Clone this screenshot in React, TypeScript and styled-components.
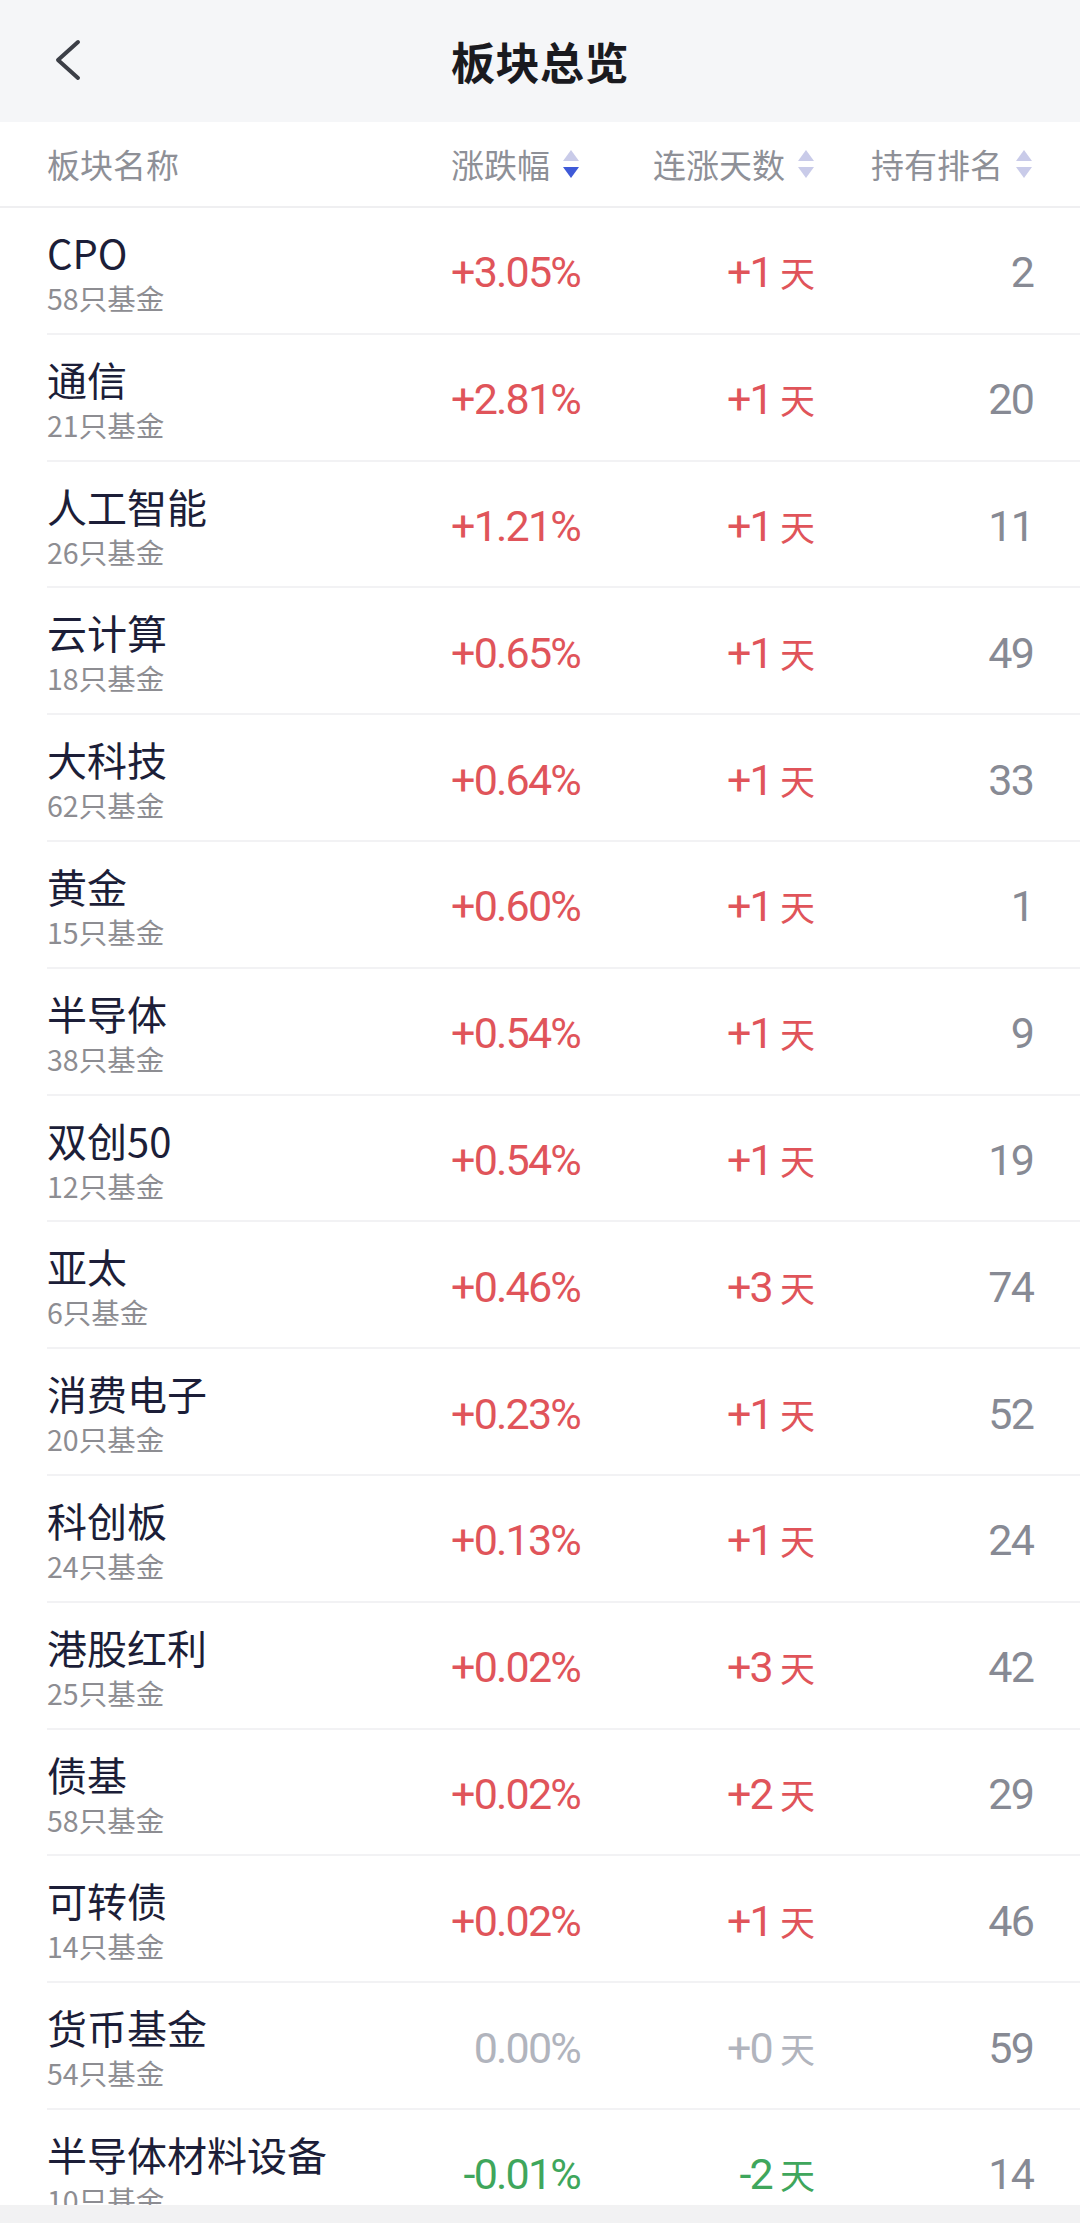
import React from "react";
import styled, { createGlobalStyle } from "styled-components";

const GlobalStyle = createGlobalStyle`
  html, body { margin: 0; padding: 0; background: #ffffff; }
  * { box-sizing: border-box; }
  body { font-family: "Noto Sans CJK SC", "Noto Sans", sans-serif; }
`;

type Tone = "up" | "flat" | "down";

interface Sector {
  name: string;
  funds: number;
  change: string;
  days: string;
  rank: number;
  tone: Tone;
}

const sectors: Sector[] = [
  { name: "CPO", funds: 58, change: "+3.05%", days: "+1", rank: 2, tone: "up" },
  { name: "通信", funds: 21, change: "+2.81%", days: "+1", rank: 20, tone: "up" },
  { name: "人工智能", funds: 26, change: "+1.21%", days: "+1", rank: 11, tone: "up" },
  { name: "云计算", funds: 18, change: "+0.65%", days: "+1", rank: 49, tone: "up" },
  { name: "大科技", funds: 62, change: "+0.64%", days: "+1", rank: 33, tone: "up" },
  { name: "黄金", funds: 15, change: "+0.60%", days: "+1", rank: 1, tone: "up" },
  { name: "半导体", funds: 38, change: "+0.54%", days: "+1", rank: 9, tone: "up" },
  { name: "双创50", funds: 12, change: "+0.54%", days: "+1", rank: 19, tone: "up" },
  { name: "亚太", funds: 6, change: "+0.46%", days: "+3", rank: 74, tone: "up" },
  { name: "消费电子", funds: 20, change: "+0.23%", days: "+1", rank: 52, tone: "up" },
  { name: "科创板", funds: 24, change: "+0.13%", days: "+1", rank: 24, tone: "up" },
  { name: "港股红利", funds: 25, change: "+0.02%", days: "+3", rank: 42, tone: "up" },
  { name: "债基", funds: 58, change: "+0.02%", days: "+2", rank: 29, tone: "up" },
  { name: "可转债", funds: 14, change: "+0.02%", days: "+1", rank: 46, tone: "up" },
  { name: "货币基金", funds: 54, change: "0.00%", days: "+0", rank: 59, tone: "flat" },
  { name: "半导体材料设备", funds: 10, change: "-0.01%", days: "-2", rank: 14, tone: "down" },
];

const toneColor: Record<Tone, string> = {
  up: "#e0545a",
  flat: "#b1b4bd",
  down: "#3fa65c",
};

const Page = styled.div`
  width: 1080px;
  height: 2223px;
  display: flex;
  flex-direction: column;
  overflow: hidden;
  background: #ffffff;
`;

const TopBar = styled.header`
  flex: 0 0 122px;
  display: grid;
  grid-template-columns: 200px 1fr 200px;
  align-items: center;
  background: #f5f6f8;
  padding-left: 48px;
`;

const BackIcon = styled.svg`
  width: 40px;
  height: 50px;
  display: block;
`;

const Title = styled.h1`
  margin: 0;
  text-align: center;
  font-size: 44px;
  line-height: 60px;
  font-weight: 700;
  color: #1a1a1f;
  letter-spacing: 0.5px;
  transform: translateX(-24px);
`;

const Grid = styled.div`
  display: grid;
  grid-template-columns: 333px 200px 235px 218px;
  padding: 0 47px;
  align-items: center;
`;

const ColumnHeader = styled(Grid)`
  flex: 0 0 86px;
  border-bottom: 2px solid #efeff1;
`;

const HeadCell = styled.div<{ $right?: boolean }>`
  display: flex;
  align-items: center;
  justify-content: ${(p) => (p.$right ? "flex-end" : "flex-start")};
  gap: 12px;
  font-size: 33px;
  line-height: 44px;
  color: #8e9097;
`;

const SortIcon = styled.svg`
  width: 18px;
  height: 30px;
  display: block;
  flex: 0 0 auto;
`;

const List = styled.div`
  flex: 1 1 auto;
  overflow: hidden;
`;

const Row = styled(Grid)`
  height: 126.8px;
  position: relative;
  &::after {
    content: "";
    position: absolute;
    left: 47px;
    right: 0;
    bottom: 0;
    height: 2px;
    background: #f2f2f4;
  }
`;

const NameCell = styled.div`
  display: flex;
  flex-direction: column;
  align-self: start;
  padding-top: 19px;
`;

const Name = styled.div`
  font-size: 40px;
  line-height: 50px;
  color: #1c1e38;
  white-space: nowrap;
`;

const Sub = styled.div`
  font-size: 28.5px;
  line-height: 42px;
  color: #8d8d92;
  white-space: nowrap;
`;

const NumCell = styled.div<{ $color: string }>`
  display: flex;
  justify-content: flex-end;
  align-items: baseline;
  font-family: Roboto, "Noto Sans", sans-serif;
  font-weight: 400;
  font-size: 43px;
  line-height: 50px;
  letter-spacing: -1.8px;
  color: ${(p) => p.$color};
  white-space: nowrap;
  padding-top: 2px;
`;

const DayUnit = styled.span`
  font-family: "Noto Sans CJK SC", sans-serif;
  font-weight: 400;
  font-size: 35px;
  letter-spacing: 0;
  margin-left: 8px;
`;

const BottomBar = styled.div`
  flex: 0 0 18px;
  background: #f2f2f3;
`;

const Sort: React.FC<{ active?: boolean }> = ({ active }) => (
  <SortIcon viewBox="0 0 18 30">
    <polygon points="9,1 17,12 1,12" fill="#c9cbe9" />
    <polygon points="1,18 17,18 9,29" fill={active ? "#3f5ad8" : "#c9cbe9"} />
  </SortIcon>
);

export default function App() {
  return (
    <Page>
      <GlobalStyle />
      <TopBar>
        <BackIcon viewBox="0 0 40 50">
          <polyline
            points="30,6 10,24 30,42"
            fill="none"
            stroke="#3c3f47"
            strokeWidth="4"
            strokeLinecap="round"
            strokeLinejoin="round"
          />
        </BackIcon>
        <Title>板块总览</Title>
        <div />
      </TopBar>
      <ColumnHeader>
        <HeadCell>板块名称</HeadCell>
        <HeadCell $right>
          涨跌幅
          <Sort active />
        </HeadCell>
        <HeadCell $right>
          连涨天数
          <Sort />
        </HeadCell>
        <HeadCell $right>
          持有排名
          <Sort />
        </HeadCell>
      </ColumnHeader>
      <List>
        {sectors.map((s) => (
          <Row key={s.name}>
            <NameCell>
              <Name>{s.name}</Name>
              <Sub>{s.funds}只基金</Sub>
            </NameCell>
            <NumCell $color={toneColor[s.tone]}>{s.change}</NumCell>
            <NumCell $color={toneColor[s.tone]}>
              {s.days}
              <DayUnit>天</DayUnit>
            </NumCell>
            <NumCell $color="#878a94">{s.rank}</NumCell>
          </Row>
        ))}
      </List>
      <BottomBar />
    </Page>
  );
}
